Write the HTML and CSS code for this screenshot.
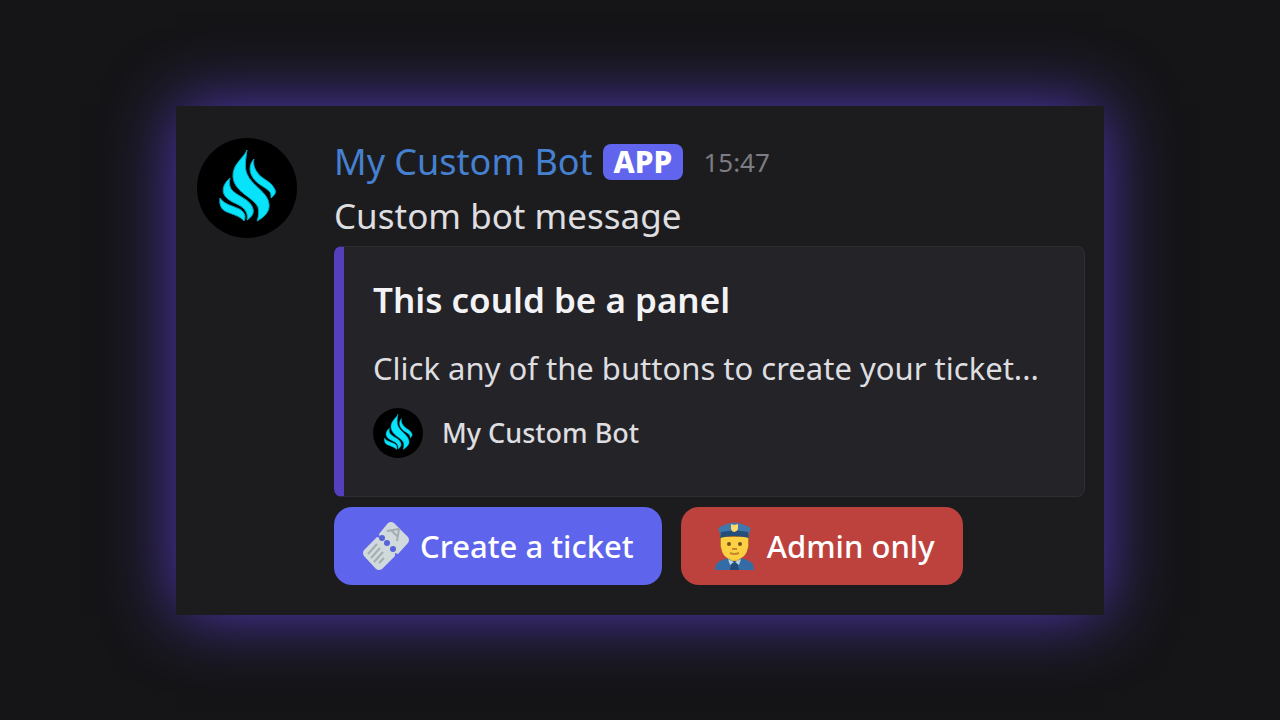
FILE: index.html
```
<!DOCTYPE html>
<html lang="en">
  <head>
    <meta charset="utf-8">
    <title>My Custom Bot</title>
    <link rel="stylesheet" href="styles.css">
  </head>
  <body>
    <svg class="sprite" aria-hidden="true">
      <symbol id="flame" viewBox="0 0 100 100">
        <circle cx="50" cy="50" r="50" fill="#000"/>
        <g fill="#07e3fb" stroke="#07a5bd" stroke-width="1">
          <path d="M50 12C47 20 35 26 36 39C37 54 56 59 61 69C62 74 62 78 60 83C68 79 73 73 72 66C71 54 55 48 50 36C47 29 49 20 50 12Z"/>
          <path d="M57 21C53 25 52 31 54 36C58 46 67 48 72 53C74 55 74 56 74 60C78 57 80 54 77 50C74 43 64 41 60 34C57 30 56 25 57 21Z"/>
          <path d="M33 40C27 45 24 52 28 58C33 65 44 66 48 72C50 75 51 78 50 82C55 79 57 75 56 71C54 61 39 58 34 51C32 47 32 43 33 40Z"/>
          <path d="M23 60C22 66 24 72 30 74C37 77 43 78 47 83C49 79 48 75 44 72C38 68 27 67 23 60Z"/>
        </g>
      </symbol>
    </svg>

    <main class="message">
      <svg class="avatar" role="img" aria-label="Avatar"><use href="#flame"/></svg>
      <div class="content">
        <div class="header">
          <span class="name">My Custom Bot</span>
          <span class="tag">APP</span>
          <time class="time">15:47</time>
        </div>
        <p class="text">Custom bot message</p>

        <article class="embed">
          <h1 class="title">This could be a panel</h1>
          <p class="description">Click any of the buttons to create your ticket...</p>
          <footer class="footer">
            <svg class="footer-icon" aria-hidden="true"><use href="#flame"/></svg>
            <span>My Custom Bot</span>
          </footer>
        </article>

        <div class="buttons">
          <button type="button" class="button primary">
            <svg class="emoji" viewBox="0 0 50 50" aria-hidden="true">
              <path fill="#d0d9dc" d="M26 2Q29 0 32 2L46 16Q48 19 46 22L36 33L33 32L33 35L20 48Q17 50 14 48L2 35Q0 32 2 29L15 16L18 17L17 13Z"/>
              <g fill="#5865d8">
                <circle cx="20" cy="17" r="3"/>
                <circle cx="25" cy="22" r="3"/>
                <circle cx="31" cy="28" r="3"/>
              </g>
              <g fill="none" stroke="#a3adb2" stroke-width="2">
                <path d="M15 23L6 33M18 27L9 37M21 31L12 41M22 37L17 42"/>
                <path d="M25 10L37 8L35 20M29 9L36 16"/>
              </g>
            </svg>
            Create a ticket
          </button>
          <button type="button" class="button danger">
            <svg class="emoji" viewBox="0 0 50 50" aria-hidden="true">
              <path fill="#346da5" d="M6 49Q6 41 13 39L20 37H31L38 39Q45 41 45 49Z"/>
              <path fill="#e6b52c" d="M20 33H31V38L26 42L20 38Z"/>
              <path fill="#234d78" d="M23 40H28L30 49H21Z"/>
              <path fill="#b9d3e9" d="M19 38L25 41L21 44ZM32 38L26 41L30 44Z"/>
              <path fill="#b8782b" d="M11 13H40V24Q40 28 37 28H14Q11 28 11 24Z"/>
              <path fill="#fcd042" d="M12 16H39V25Q38 38 25 39Q13 38 12 25Z"/>
              <path fill="#3f78ad" d="M10 10Q8 7 13 5Q25-2 38 5Q43 7 41 10L39 15H12Z"/>
              <path fill="#254e78" d="M12 11Q25 8 39 11L40 17Q25 13 11 17Z"/>
              <path fill="#fcd96a" d="M22 3L25 4L29 3V7Q29 10 25 11Q22 10 22 7Z"/>
              <circle cx="20" cy="23" r="2" fill="#715022"/>
              <circle cx="31" cy="23" r="2" fill="#715022"/>
              <path d="M23 28H28M21 32Q25 34 30 32" fill="none" stroke="#c4852b" stroke-width="2"/>
            </svg>
            Admin only
          </button>
        </div>
      </div>
    </main>
  </body>
</html>
```

FILE: styles.css
```
* {
  box-sizing: border-box;
}
body {
  min-height: 100vh;
  margin: 0;
  padding: 0 176px;
  display: flex;
  align-items: center;
  background: #151517;
  color: #dedee0;
  font-family: "Noto Sans", sans-serif;
}
h1, p {
  margin: 0;
}
.sprite {
  position: absolute;
  width: 0;
  height: 0;
}
.message {
  flex: 1;
  display: flex;
  gap: 37px;
  padding: 32px 19px 30px 21px;
  background: #1c1c1f;
  box-shadow: 0 0 64px #5239b8;
}
.avatar {
  flex: none;
  width: 100px;
  height: 100px;
}
.content {
  flex: 1;
  min-width: 0;
}
.header {
  display: flex;
  align-items: center;
  height: 48px;
}
.name {
  color: #4680d0;
  font-size: 36px;
}
.tag {
  margin-left: 10px;
  padding: 0 11px;
  border-radius: 8px;
  background: #6165ee;
  color: #fff;
  font-size: 30px;
  font-weight: 800;
  line-height: 36px;
}
.time {
  margin-left: 20px;
  color: #7c7c82;
  font-size: 26px;
  line-height: 40px;
}
.text {
  font-size: 35px;
  line-height: 60px;
}
.embed {
  padding: 29px 30px 38px 29px;
  border: 1px solid #2d2d32;
  border-left: 10px solid #553fbd;
  border-radius: 8px;
  background: #242428;
}
.title {
  color: #f3f3f5;
  font-size: 35px;
  font-weight: 600;
  line-height: 48px;
}
.description {
  margin-top: 20px;
  font-size: 31px;
  line-height: 48px;
}
.footer {
  display: flex;
  align-items: center;
  gap: 19px;
  margin-top: 16px;
  font-size: 27px;
  font-weight: 500;
  line-height: 50px;
}
.footer-icon {
  width: 50px;
  height: 50px;
}
.buttons {
  display: flex;
  flex-wrap: wrap;
  gap: 19px;
  margin-top: 10px;
}
.button {
  display: flex;
  align-items: center;
  gap: 8px;
  height: 78px;
  padding: 0 28px;
  border: none;
  border-radius: 18px;
  color: #fff;
  font-family: inherit;
  font-size: 31px;
  font-weight: 500;
  cursor: pointer;
}
.primary {
  background: #5e65ec;
}
.danger {
  background: #bd423e;
}
.emoji {
  width: 50px;
  height: 50px;
}
```
